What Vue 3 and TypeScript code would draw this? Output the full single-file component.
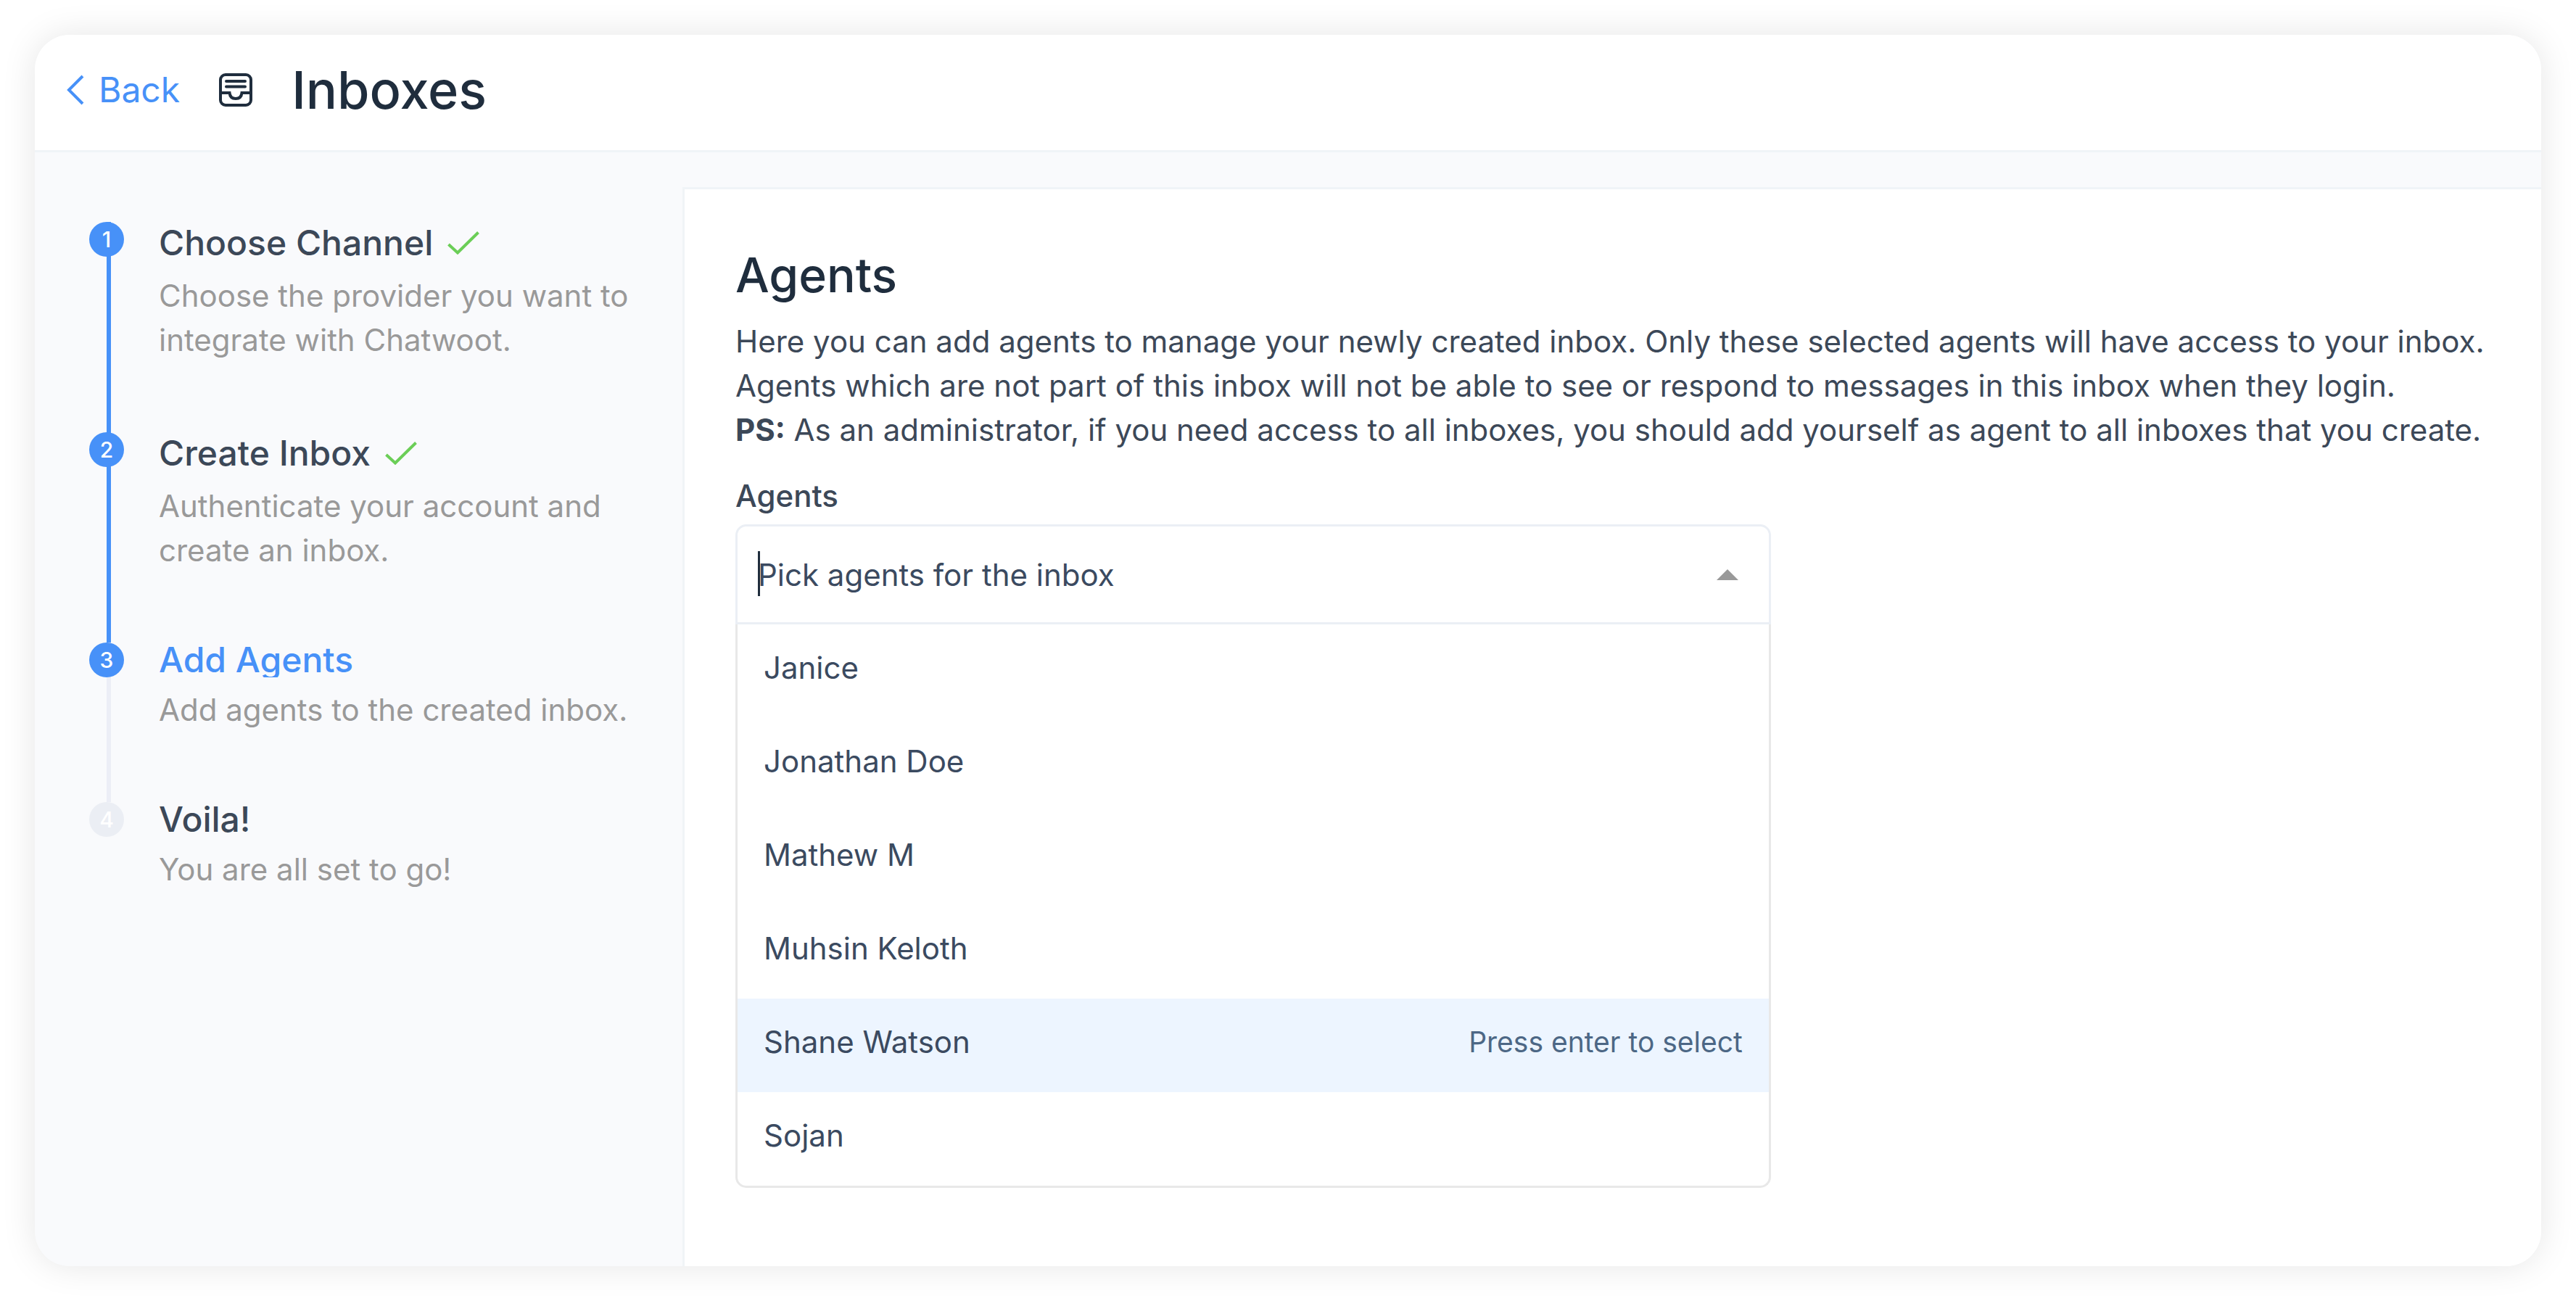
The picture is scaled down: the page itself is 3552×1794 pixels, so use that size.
<script setup lang="ts">
import { ref } from 'vue'

interface Step {
  title: string
  body: string
  state: 'done' | 'active' | 'pending'
}

const steps: Step[] = [
  { title: 'Choose Channel', body: 'Choose the provider you want to integrate with Chatwoot.', state: 'done' },
  { title: 'Create Inbox', body: 'Authenticate your account and create an inbox.', state: 'done' },
  { title: 'Add Agents', body: 'Add agents to the created inbox.', state: 'active' },
  { title: 'Voila!', body: 'You are all set to go!', state: 'pending' },
]

const agents = ['Janice', 'Jonathan Doe', 'Mathew M', 'Muhsin Keloth', 'Shane Watson', 'Sojan']
const highlighted = ref(4)
const query = ref('')
</script>

<template>
  <div class="card">
    <header class="header">
      <a class="back" href="#back">
        <svg class="chevron" viewBox="0 0 24 42" fill="none" aria-hidden="true">
          <path d="M22 2 3 21l19 19" stroke="currentColor" stroke-width="4" />
        </svg>
        Back
      </a>
      <svg class="inbox-icon" viewBox="0 0 46 46" fill="none" stroke="currentColor" stroke-width="4" aria-hidden="true">
        <rect x="2" y="2" width="42" height="42" rx="7" />
        <path d="M10 11h26M10 18.500h26" stroke-linecap="round" />
        <path d="M2 27h12.500c.5 5 3.500 8 8.500 8s8-3 8.500-8H44" />
      </svg>
      <h1 class="page-title">Inboxes</h1>
    </header>

    <div class="layout">
      <ol class="wizard">
        <li v-for="(step, i) in steps" :key="step.title" class="step" :class="step.state">
          <span class="badge">{{ i + 1 }}</span>
          <div class="step-text">
            <h3 class="step-title">
              {{ step.title }}
              <svg v-if="step.state === 'done'" class="check" viewBox="0 0 44 32" fill="none" aria-hidden="true">
                <path d="M1.500 18 14 29.500 42.500 1.500" stroke="currentColor" stroke-width="4" />
              </svg>
            </h3>
            <p class="step-body">{{ step.body }}</p>
          </div>
        </li>
      </ol>

      <main class="content">
        <h2 class="heading">Agents</h2>
        <p class="intro">
          Here you can add agents to manage your newly created inbox. Only these selected agents will have access to
          your inbox. Agents which are not part of this inbox will not be able to see or respond to messages in this
          inbox when they login.<br />
          <b>PS:</b> As an administrator, if you need access to all inboxes, you should add yourself as agent to all
          inboxes that you create.
        </p>

        <label class="label" for="agent-search">Agents</label>
        <div class="multiselect">
          <div class="control">
            <span class="cursor"></span>
            <input
              id="agent-search"
              v-model="query"
              class="search"
              type="text"
              role="combobox"
              aria-expanded="true"
              aria-controls="agent-options"
              placeholder="Pick agents for the inbox"
            />
            <span class="arrow"></span>
          </div>
          <ul id="agent-options" class="options" role="listbox">
            <li
              v-for="(agent, i) in agents"
              :key="agent"
              class="option"
              :class="{ highlighted: i === highlighted }"
              role="option"
              aria-selected="false"
              @mouseenter="highlighted = i"
            >
              <span>{{ agent }}</span>
              <span v-if="i === highlighted" class="hint">Press enter to select</span>
            </li>
          </ul>
        </div>
      </main>
    </div>
  </div>
</template>

<style>
body {
  margin: 0;
  background: #fff;
}
</style>

<style scoped>
* {
  box-sizing: border-box;
}

.card {
  display: flex;
  flex-direction: column;
  min-height: calc(100vh - 96px);
  margin: 48px;
  overflow: hidden;
  border-radius: 48px;
  background: #f9fafc;
  box-shadow: 0 0 48px rgba(0, 0, 0, 0.1);
  color: #3c4858;
  font-family: Inter, 'Liberation Sans', sans-serif;
  font-optical-sizing: none;
  font-size: 42px;
  line-height: 61px;
}

.header {
  display: flex;
  align-items: center;
  height: 162px;
  padding: 0 44px 8px;
  border-bottom: 3px solid #f0f4f7;
  background: #fff;
}

.back {
  display: flex;
  align-items: center;
  gap: 20px;
  color: #4791f8;
  font-size: 48px;
  text-decoration: none;
}

.chevron {
  width: 24px;
  height: 42px;
}

.inbox-icon {
  width: 46px;
  height: 46px;
  margin: 0 54px;
  color: #1f2d3d;
}

.page-title {
  margin: 0;
  color: #1f2d3d;
  font-size: 72px;
  font-weight: 500;
  line-height: 90px;
}

.layout {
  display: grid;
  flex: 1;
  grid-template-columns: minmax(0, 893fr) minmax(0, 2563fr);
}

.wizard {
  margin: 0;
  padding: 96px 48px 0 75px;
  list-style: none;
}

.step {
  position: relative;
  display: flex;
  gap: 48px;
  padding-bottom: 97px;
}

.step:not(:last-child)::before {
  position: absolute;
  top: 0;
  bottom: 0;
  left: 24px;
  width: 6px;
  background: #eceef6;
  content: '';
}

.step.done:not(:last-child)::before {
  background: #4791f8;
}

.badge {
  position: relative;
  flex: none;
  width: 48px;
  height: 48px;
  border-radius: 50%;
  background: #4791f8;
  color: #fff;
  font-size: 30px;
  font-weight: 500;
  line-height: 48px;
  text-align: center;
}

.pending .badge {
  background: #ebeef4;
}

.step-title {
  display: flex;
  align-items: center;
  gap: 20px;
  margin: 0 0 14px;
  color: #3c4858;
  font-size: 48px;
  font-weight: 500;
  line-height: 48px;
}

.done .step-title {
  line-height: 57px;
}

.active .step-title {
  overflow: hidden;
  color: #4791f8;
}

.check {
  width: 44px;
  height: 32px;
  color: #6bce57;
}

.step-body {
  margin: 0;
  color: #999;
}

.content {
  margin-top: 48px;
  padding: 72px 70px;
  border-top: 3px solid #f0f4f7;
  border-left: 3px solid #f0f4f7;
  background: #fff;
}

.heading {
  margin: 0 0 15px;
  color: #1f2d3d;
  font-size: 66px;
  font-weight: 500;
  line-height: 92px;
}

.intro {
  margin: 0;
}

.intro b {
  font-weight: 700;
}

.label {
  display: block;
  margin-top: 30px;
  font-weight: 500;
}

.multiselect {
  width: 59%;
  margin-top: 9px;
}

.control {
  position: relative;
  display: flex;
  align-items: center;
  height: 138px;
  padding: 0 42px 0 28px;
  border: 3px solid #ebeff5;
  border-radius: 15px 15px 0 0;
}

.cursor {
  position: absolute;
  top: 34px;
  left: 28px;
  width: 3px;
  height: 62px;
  background: #1f2d3d;
}

.search {
  flex: 1;
  min-width: 0;
  height: 60px;
  padding: 0;
  border: 0;
  outline: 0;
  background: transparent;
  color: #3b4a60;
  font: inherit;
}

.search::placeholder {
  color: #3b4a60;
  opacity: 1;
}

.arrow {
  border-right: 15px solid transparent;
  border-bottom: 15px solid #999;
  border-left: 15px solid transparent;
}

.options {
  margin: 0;
  padding: 0;
  border: 3px solid #e8e8e8;
  border-top: 0;
  border-radius: 0 0 15px 15px;
  list-style: none;
  overflow: hidden;
}

.option {
  display: flex;
  justify-content: space-between;
  height: 129px;
  padding: 36px;
  color: #3b4a60;
  line-height: 48px;
}

.highlighted {
  background: #edf5ff;
}

.hint {
  color: #4c6785;
  font-size: 39px;
}
</style>
